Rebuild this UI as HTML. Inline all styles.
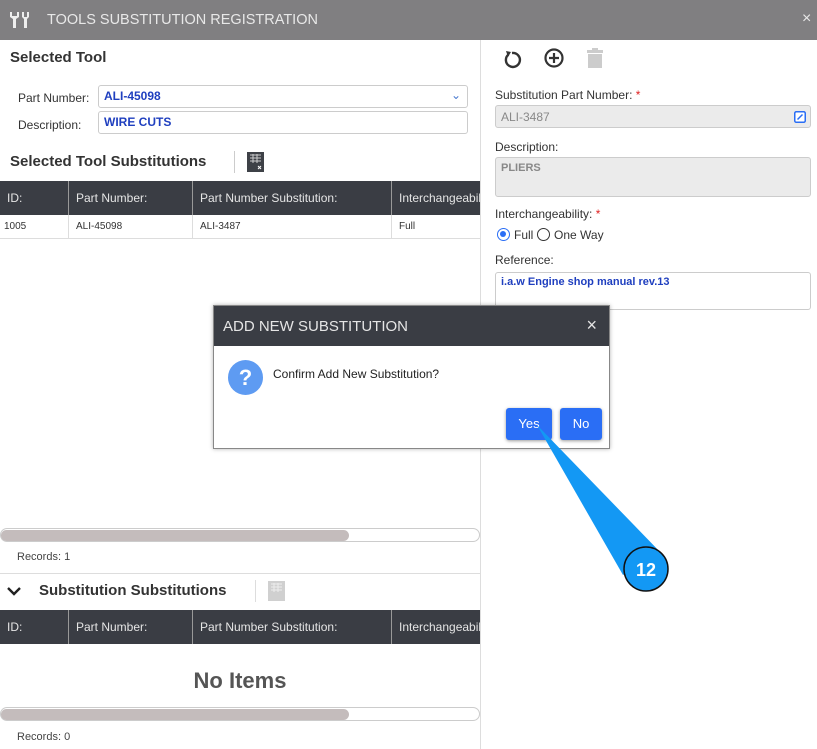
<!DOCTYPE html>
<html><head><style>
*{box-sizing:border-box;margin:0;padding:0}
body{width:817px;height:749px;position:relative;overflow:hidden;background:#fff;font-family:"Liberation Sans",sans-serif;color:#333}
.a{position:absolute}
.title{left:0;top:0;width:817px;height:40px;background:#807f81;color:#e8e8e8;font-size:15px}
.h{font-weight:bold;font-size:15px;color:#333}
.lbl{font-size:12px;color:#333}
.inp{border:1px solid #ccc;border-radius:3px;background:#fff;font-size:12px;color:#1f3fbf;padding:3px 5px;font-weight:bold}
.th{background:#3a3d44;color:#e5e5e5;font-size:12px;height:34px}
.th div,.tr div{position:absolute;top:0;height:100%;padding-left:7px;line-height:34px}
.tr{font-size:10px;color:#333;height:24px;border-bottom:1px solid #ddd}
.tr div{line-height:24px;border-right:1px solid #ddd}
.th div{border-right:1px solid #999}
.sb{height:14px;border:1px solid #ccc;border-radius:7px;left:0;width:480px}
.sb i{position:absolute;left:0;top:1px;height:11px;width:348px;background:#c4bcbc;border-radius:6px}
.rl{font-size:11px;color:#444}
.gray{background:#ebebeb;border:1px solid #ccc;border-radius:3px;font-size:11px;color:#888;padding:4px 5px;font-weight:bold}
.star{color:#e02020}
</style></head><body>
<div class="a title">
<svg class="a" style="left:8px;top:11px" width="24" height="18" viewBox="0 0 24 18"><path d="M2 1v5l3 2v9h3V8l3-2V1H9v4H4V1z" fill="#eee"/><path d="M14 1h2v5h3V1h2v5l-2 2v9h-3V8l-2-2z" fill="#eee"/></svg>
<div class="a" style="left:47px;top:12px;font-size:14.5px">TOOLS SUBSTITUTION REGISTRATION</div>
<div class="a" style="left:802px;top:10px;font-size:16px">×</div>
</div>
<div class="a" style="left:480px;top:40px;width:1px;height:709px;background:#ddd"></div>
<div class="a h" style="left:10px;top:49px">Selected Tool</div>
<div class="a lbl" style="left:18px;top:91px">Part Number:</div>
<div class="a inp" style="left:98px;top:85px;width:370px;height:23px">ALI-45098<span style="position:absolute;right:6px;top:2px;color:#4a7bd0;font-weight:normal">⌄</span></div>
<div class="a lbl" style="left:18px;top:118px">Description:</div>
<div class="a inp" style="left:98px;top:111px;width:370px;height:23px">WIRE CUTS</div>
<div class="a h" style="left:10px;top:153px">Selected Tool Substitutions</div>
<div class="a" style="left:234px;top:151px;width:1px;height:22px;background:#ccc"></div>
<svg class="a" style="left:247px;top:152px" width="17" height="20"><rect width="17" height="20" fill="#3e4147"/><path d="M3 3h11M3 6h11M3 9h11M6 2v9M10 2v9" stroke="#ccc" stroke-width="1"/><path d="M11 14l3 3M14 14l-3 3" stroke="#fff"/></svg>
<div class="a th" style="left:0;top:181px;width:480px"><div style="left:0;width:69px">ID:</div><div style="left:69px;width:124px">Part Number:</div><div style="left:193px;width:199px">Part Number Substitution:</div><div style="left:392px;width:88px;border:none;overflow:hidden;white-space:nowrap">Interchangeability</div></div>
<div class="a tr" style="left:0;top:215px;width:480px"><div style="left:0;width:69px;padding-left:4px">1005</div><div style="left:69px;width:124px">ALI-45098</div><div style="left:193px;width:199px">ALI-3487</div><div style="left:392px;width:88px;border:none">Full</div></div>
<div class="a sb" style="top:528px"><i></i></div>
<div class="a rl" style="left:17px;top:551px">Records: 1</div>
<div class="a" style="left:0;top:573px;width:480px;height:1px;background:#ddd"></div>
<svg class="a" style="left:7px;top:586px" width="14" height="10"><path d="M1 2l6 6 6-6" stroke="#222" stroke-width="2.4" fill="none"/></svg>
<div class="a h" style="left:39px;top:582px">Substitution Substitutions</div>
<div class="a" style="left:255px;top:580px;width:1px;height:22px;background:#ddd"></div>
<svg class="a" style="left:268px;top:581px" width="17" height="20"><rect width="17" height="20" fill="#d0d0d0"/><path d="M3 3h11M3 6h11M3 9h11M6 2v9M10 2v9" stroke="#eee" stroke-width="1"/></svg>
<div class="a th" style="left:0;top:610px;width:480px"><div style="left:0;width:69px">ID:</div><div style="left:69px;width:124px">Part Number:</div><div style="left:193px;width:199px">Part Number Substitution:</div><div style="left:392px;width:88px;border:none;overflow:hidden;white-space:nowrap">Interchangeability</div></div>
<div class="a" style="left:0;top:668px;width:480px;text-align:center;font-size:22px;font-weight:bold;color:#555">No Items</div>
<div class="a sb" style="top:707px"><i></i></div>
<div class="a rl" style="left:17px;top:731px">Records: 0</div>
<!-- right -->
<svg class="a" style="left:501px;top:48px" width="22" height="22" viewBox="0 0 22 22"><path d="M7.5 6.5A7 7 0 1 0 11 5" stroke="#333" stroke-width="2.4" fill="none"/><path d="M5 3l5 1-3 5z" fill="#333"/></svg>
<svg class="a" style="left:543px;top:47px" width="22" height="22" viewBox="0 0 22 22"><circle cx="11" cy="11" r="8.5" stroke="#333" stroke-width="2.2" fill="none"/><path d="M11 6v10M6 11h10" stroke="#333" stroke-width="2.2"/></svg>
<svg class="a" style="left:586px;top:48px" width="18" height="20" viewBox="0 0 18 20"><rect x="1" y="2" width="16" height="3" fill="#ccc"/><rect x="6" y="0" width="6" height="3" fill="#ccc"/><rect x="2" y="6" width="14" height="14" fill="#ccc"/></svg>
<div class="a lbl" style="left:495px;top:88px">Substitution Part Number: <span class="star">*</span></div>
<div class="a gray" style="left:495px;top:105px;width:316px;height:23px;font-weight:normal;font-size:12px">ALI-3487<svg style="position:absolute;right:4px;top:5px" width="12" height="12"><rect x="0.75" y="0.75" width="10.5" height="10.5" rx="1.5" fill="#fff" stroke="#2a6ef5" stroke-width="1.5"/><path d="M3.5 8.5l5-5" stroke="#2a6ef5" stroke-width="1.5"/></svg></div>
<div class="a lbl" style="left:495px;top:140px">Description:</div>
<div class="a gray" style="left:495px;top:157px;width:316px;height:40px">PLIERS</div>
<div class="a lbl" style="left:495px;top:207px">Interchangeability: <span class="star">*</span></div>
<div class="a" style="left:497px;top:228px;width:13px;height:13px;border:1.5px solid #2a6ef5;border-radius:50%"><i style="position:absolute;left:2px;top:2px;width:6px;height:6px;border-radius:50%;background:#2a6ef5"></i></div>
<div class="a lbl" style="left:514px;top:228px">Full</div>
<div class="a" style="left:537px;top:228px;width:13px;height:13px;border:1.5px solid #333;border-radius:50%"></div>
<div class="a lbl" style="left:554px;top:228px">One Way</div>
<div class="a lbl" style="left:495px;top:253px">Reference:</div>
<div class="a inp" style="left:495px;top:272px;width:316px;height:38px;font-size:11px;color:#1f3fbf">i.a.w Engine shop manual rev.13</div>
<!-- dialog -->
<div class="a" style="left:213px;top:305px;width:397px;height:144px;background:#fff;border:1px solid #888;box-shadow:0 0 4px rgba(0,0,0,.3)">
<div class="a" style="left:0;top:0;width:395px;height:40px;background:#3a3d44;color:#e5e5e5;font-size:15px;padding:12px 0 0 9px">ADD NEW SUBSTITUTION<span style="position:absolute;right:12px;top:9px;font-size:18px">×</span></div>
<div class="a" style="left:14px;top:54px;width:35px;height:35px;border-radius:50%;background:#5e9bf2;color:#fff;font-weight:bold;font-size:22px;text-align:center;line-height:35px">?</div>
<div class="a" style="left:59px;top:61px;font-size:12px;color:#222">Confirm Add New Substitution?</div>
<div class="a" style="left:292px;top:102px;width:46px;height:32px;background:#2a6ef5;border-radius:3px;color:#fff;font-size:13px;text-align:center;line-height:32px;box-shadow:0 1px 3px rgba(0,0,0,.4)">Yes</div>
<div class="a" style="left:346px;top:102px;width:42px;height:32px;background:#2a6ef5;border-radius:3px;color:#fff;font-size:13px;text-align:center;line-height:32px;box-shadow:0 1px 3px rgba(0,0,0,.4)">No</div>
</div>
<svg class="a" style="left:0;top:0" width="817" height="749"><path d="M537 425L623 575L663 555Z" fill="#1398f4"/><circle cx="646" cy="569" r="22" fill="#1398f4" stroke="#111" stroke-width="1.5"/><text x="646" y="576" fill="#fff" font-family="Liberation Sans" font-weight="bold" font-size="18" text-anchor="middle">12</text></svg>
</body></html>
